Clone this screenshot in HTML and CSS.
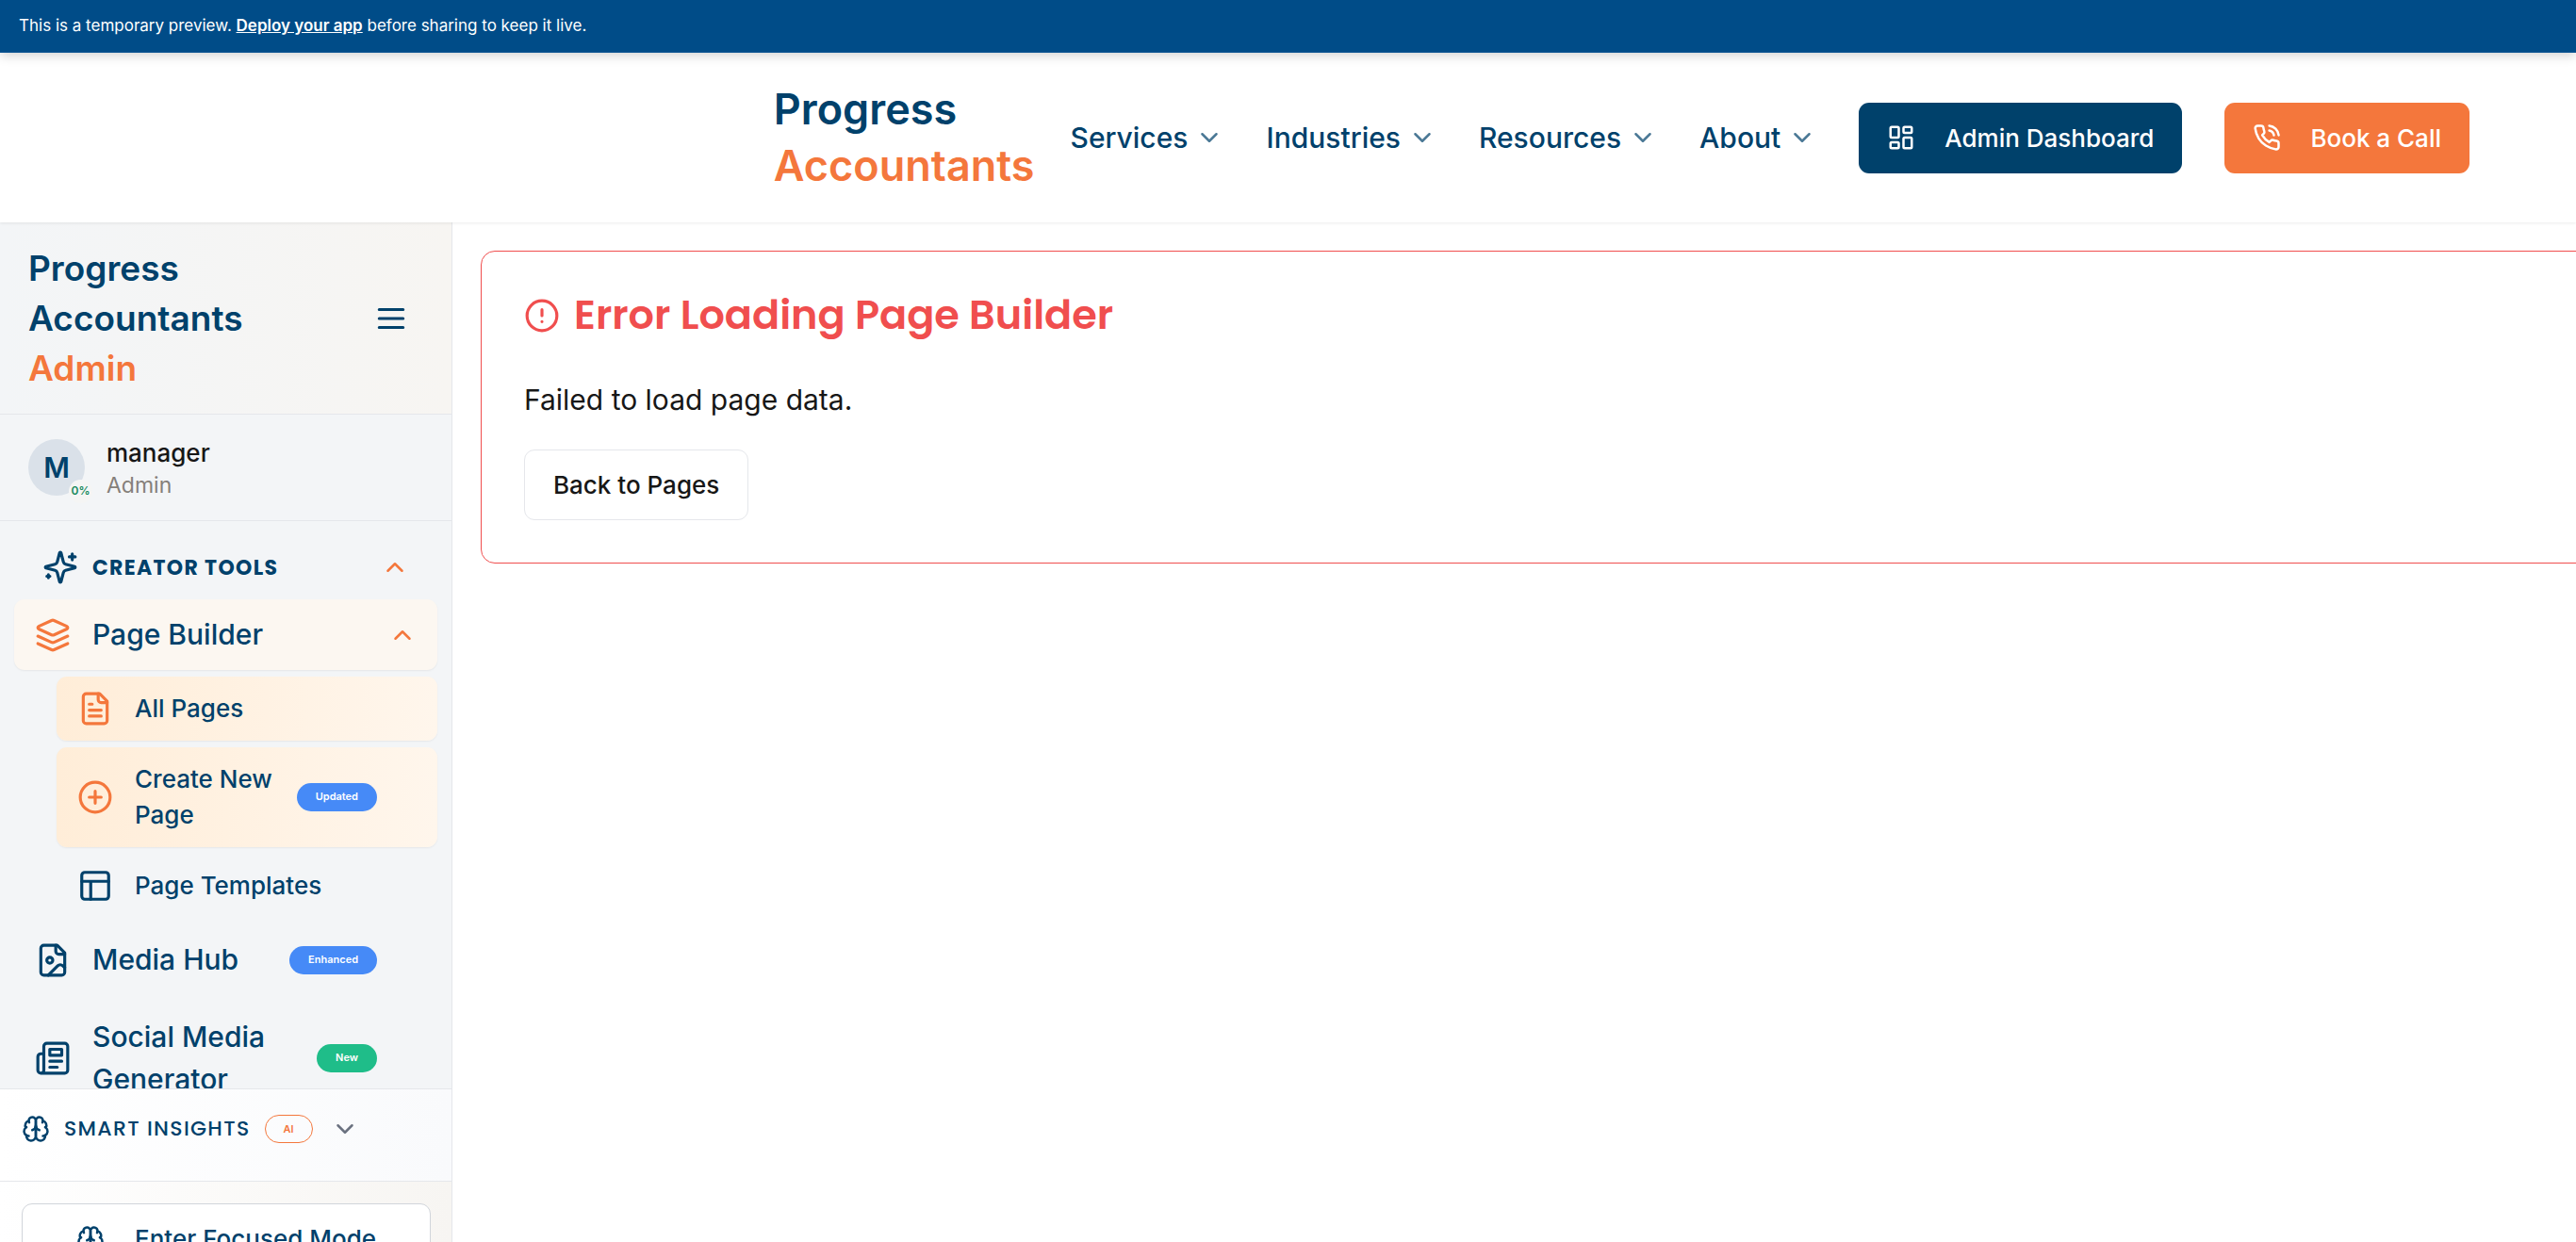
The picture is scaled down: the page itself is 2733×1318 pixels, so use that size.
FILE: index.html
```html
<!DOCTYPE html>
<html lang="en">
<head>
<meta charset="utf-8">
<title>Page Builder - Progress Accountants Admin</title>
<link rel="stylesheet" href="styles.css">
</head>
<body>
<svg class="sprite" aria-hidden="true">
  <symbol id="chevron-down" viewBox="0 0 24 24"><path d="m6 9 6 6 6-6"/></symbol>
  <symbol id="chevron-up" viewBox="0 0 24 24"><path d="m18 15-6-6-6 6"/></symbol>
  <symbol id="dashboard" viewBox="0 0 24 24"><rect width="7" height="9" x="3" y="3" rx="1"/><rect width="7" height="5" x="14" y="3" rx="1"/><rect width="7" height="9" x="14" y="12" rx="1"/><rect width="7" height="5" x="3" y="16" rx="1"/></symbol>
  <symbol id="phone-call" viewBox="0 0 24 24"><path d="M22 16.92v3a2 2 0 0 1-2.18 2 19.79 19.79 0 0 1-8.63-3.07 19.5 19.5 0 0 1-6-6 19.79 19.79 0 0 1-3.07-8.67A2 2 0 0 1 4.11 2h3a2 2 0 0 1 2 1.72 12.84 12.84 0 0 0 .7 2.81 2 2 0 0 1-.45 2.11L8.09 9.91a16 16 0 0 0 6 6l1.27-1.27a2 2 0 0 1 2.11-.45 12.84 12.84 0 0 0 2.81.7A2 2 0 0 1 22 16.92z"/><path d="M14.05 2a9 9 0 0 1 8 7.94"/><path d="M14.05 6A5 5 0 0 1 18 10"/></symbol>
  <symbol id="menu" viewBox="0 0 24 24"><path d="M4 12h16M4 6h16M4 18h16"/></symbol>
  <symbol id="sparkles" viewBox="0 0 24 24"><path d="M9.937 15.5A2 2 0 0 0 8.5 14.063l-6.135-1.582a.5.5 0 0 1 0-.962L8.5 9.936A2 2 0 0 0 9.937 8.5l1.582-6.135a.5.5 0 0 1 .963 0L14.063 8.5A2 2 0 0 0 15.5 9.937l6.135 1.581a.5.5 0 0 1 0 .964L15.5 14.063a2 2 0 0 0-1.437 1.437l-1.582 6.135a.5.5 0 0 1-.963 0z"/><path d="M20 3v4M22 5h-4M4 17v2M5 18H3"/></symbol>
  <symbol id="layers" viewBox="0 0 24 24"><path d="m12.83 2.18a2 2 0 0 0-1.66 0L2.6 6.08a1 1 0 0 0 0 1.83l8.58 3.91a2 2 0 0 0 1.66 0l8.58-3.9a1 1 0 0 0 0-1.83Z"/><path d="m22 17.65-9.17 4.16a2 2 0 0 1-1.66 0L2 17.65"/><path d="m22 12.65-9.17 4.16a2 2 0 0 1-1.66 0L2 12.65"/></symbol>
  <symbol id="file-text" viewBox="0 0 24 24"><path d="M15 2H6a2 2 0 0 0-2 2v16a2 2 0 0 0 2 2h12a2 2 0 0 0 2-2V7Z"/><path d="M14 2v4a2 2 0 0 0 2 2h4M10 9H8M16 13H8M16 17H8"/></symbol>
  <symbol id="plus-circle" viewBox="0 0 24 24"><circle cx="12" cy="12" r="10"/><path d="M8 12h8M12 8v8"/></symbol>
  <symbol id="layout" viewBox="0 0 24 24"><rect width="18" height="18" x="3" y="3" rx="2"/><path d="M3 9h18M9 21V9"/></symbol>
  <symbol id="file-image" viewBox="0 0 24 24"><path d="M15 2H6a2 2 0 0 0-2 2v16a2 2 0 0 0 2 2h12a2 2 0 0 0 2-2V7Z"/><path d="M14 2v4a2 2 0 0 0 2 2h4"/><circle cx="10" cy="12" r="2"/><path d="m20 17-1.296-1.296a2.41 2.41 0 0 0-3.408 0L9 22"/></symbol>
  <symbol id="newspaper" viewBox="0 0 24 24"><path d="M4 22h16a2 2 0 0 0 2-2V4a2 2 0 0 0-2-2H8a2 2 0 0 0-2 2v16a2 2 0 0 1-2 2Zm0 0a2 2 0 0 1-2-2v-9c0-1.1.9-2 2-2h2"/><path d="M18 14h-8M15 18h-5M10 6h8v4h-8V6Z"/></symbol>
  <symbol id="brain" viewBox="0 0 24 24"><path d="M12 5a3 3 0 1 0-5.997.125 4 4 0 0 0-2.526 5.77 4 4 0 0 0 .556 6.588A4 4 0 1 0 12 18Z"/><path d="M12 5a3 3 0 1 1 5.997.125 4 4 0 0 1 2.526 5.77 4 4 0 0 1-.556 6.588A4 4 0 1 1 12 18Z"/><path d="M15 13a4.5 4.5 0 0 1-3-4 4.5 4.5 0 0 1-3 4"/><path d="M17.599 6.5a3 3 0 0 0 .399-1.375M6.003 5.125A3 3 0 0 0 6.401 6.5M3.477 10.896a4 4 0 0 1 .585-.396M19.938 10.5a4 4 0 0 1 .585.396M6 18a4 4 0 0 1-1.967-.516M19.967 17.484A4 4 0 0 1 18 18"/></symbol>
  <symbol id="alert" viewBox="0 0 24 24"><circle cx="12" cy="12" r="10"/><path d="M12 8v4M12 16h.01"/></symbol>
</svg>

<div class="banner">This is a temporary preview. <a href="#deploy">Deploy your app</a> before sharing to keep it live.</div>

<header class="topbar">
  <a class="logo" href="#home"><span>Progress</span><span class="accent">Accountants</span></a>
  <nav class="topnav" aria-label="Main">
    <button class="menu-link">Services<svg class="icon"><use href="#chevron-down"/></svg></button>
    <button class="menu-link">Industries<svg class="icon"><use href="#chevron-down"/></svg></button>
    <button class="menu-link">Resources<svg class="icon"><use href="#chevron-down"/></svg></button>
    <button class="menu-link">About<svg class="icon"><use href="#chevron-down"/></svg></button>
    <a class="button button-navy" href="#dashboard-page"><svg class="icon"><use href="#dashboard"/></svg>Admin Dashboard</a>
    <a class="button button-orange" href="#book"><svg class="icon"><use href="#phone-call"/></svg>Book a Call</a>
  </nav>
</header>

<div class="shell">
  <aside class="sidebar">
    <div class="sidebar-head">
      <div class="sidebar-title">Progress Accountants <span class="accent">Admin</span></div>
      <button class="icon-button" aria-label="Toggle sidebar"><svg class="icon icon-lg"><use href="#menu"/></svg></button>
    </div>
    <div class="user">
      <div class="avatar">M<span class="progress">0%</span></div>
      <div>
        <div class="user-name">manager</div>
        <div class="user-role">Admin</div>
      </div>
    </div>
    <nav class="side-nav" aria-label="Admin">
      <button class="group-toggle"><svg class="icon icon-lg"><use href="#sparkles"/></svg><span class="grow">Creator Tools</span><svg class="icon orange"><use href="#chevron-up"/></svg></button>
      <ul class="items">
        <li>
          <button class="item item-open"><svg class="icon icon-lg orange"><use href="#layers"/></svg><span class="grow">Page Builder</span><svg class="icon orange"><use href="#chevron-up"/></svg></button>
          <ul class="items subitems">
            <li><a class="item subitem active" href="#pages"><svg class="icon icon-lg orange"><use href="#file-text"/></svg><span class="grow">All Pages</span></a></li>
            <li><a class="item subitem active" href="#new-page"><svg class="icon icon-lg orange"><use href="#plus-circle"/></svg><span class="grow">Create New Page</span><span class="badge blue">Updated</span></a></li>
            <li><a class="item subitem" href="#templates"><svg class="icon icon-lg"><use href="#layout"/></svg><span class="grow">Page Templates</span></a></li>
          </ul>
        </li>
        <li><a class="item" href="#media"><svg class="icon icon-lg"><use href="#file-image"/></svg><span class="grow">Media Hub</span><span class="badge blue">Enhanced</span></a></li>
        <li><a class="item" href="#social"><svg class="icon icon-lg"><use href="#newspaper"/></svg><span class="grow">Social Media Generator</span><span class="badge green">New</span></a></li>
      </ul>
    </nav>
    <div class="insights">
      <button class="insights-toggle"><svg class="icon"><use href="#brain"/></svg><span class="insights-label">Smart Insights</span><span class="badge outline">AI</span><svg class="icon gray"><use href="#chevron-down"/></svg></button>
    </div>
    <div class="sidebar-foot">
      <button class="focus-button"><svg class="icon"><use href="#brain"/></svg>Enter Focused Mode</button>
    </div>
  </aside>
  <main class="content">
    <section class="error-card">
      <h1><svg class="icon icon-lg"><use href="#alert"/></svg>Error Loading Page Builder</h1>
      <p>Failed to load page data.</p>
      <button class="button button-outline">Back to Pages</button>
    </section>
  </main>
</div>
</body>
</html>
```
FILE: styles.css
```css
:root {
  --navy: #00416b;
  --orange: #f4773c;
  --line: #e5e7eb;
  --red: #f04e4e;
}

* { box-sizing: border-box; }

body {
  margin: 0;
  height: 100vh;
  overflow: hidden;
  background: #fff;
  color: #171717;
  font: 400 30px/45px Inter, "Liberation Sans", sans-serif;
}

button {
  border: 0;
  padding: 0;
  background: none;
  color: inherit;
  font: inherit;
  text-align: left;
  cursor: pointer;
}

a { color: inherit; text-decoration: none; }
ul { list-style: none; margin: 0; padding: 0; }

.sprite { display: none; }

.icon {
  width: 30px;
  height: 30px;
  flex: none;
  fill: none;
  stroke: currentColor;
  stroke-width: 2;
  stroke-linecap: round;
  stroke-linejoin: round;
}
.icon-lg { width: 38px; height: 38px; }
.orange, .accent { color: var(--orange); }
.gray { color: #6b7280; }
.grow { flex: 1; }

.banner {
  position: relative;
  z-index: 2;
  height: 56px;
  padding: 0 20px;
  background: #004c88;
  border-bottom: 1px solid #0f5794;
  box-shadow: 0 2px 12px rgba(0, 0, 0, 0.2);
  color: #fff;
  font-size: 17px;
  line-height: 54px;
}
.banner a { font-weight: 600; text-decoration: underline; }

.topbar {
  position: relative;
  z-index: 1;
  height: 180px;
  padding-right: 113px;
  display: flex;
  align-items: center;
  justify-content: flex-end;
  gap: 38px;
  background: #fff;
  box-shadow: 0 1px 3px rgba(0, 0, 0, 0.08);
  color: var(--navy);
}
.logo {
  display: flex;
  flex-direction: column;
  font-size: 45px;
  font-weight: 600;
  line-height: 60px;
}
.topnav { display: flex; align-items: center; gap: 45px; }
.menu-link { display: flex; align-items: center; gap: 8px; font-weight: 500; }
.menu-link .icon { opacity: 0.7; }

.button {
  display: inline-flex;
  align-items: center;
  gap: 31px;
  height: 75px;
  padding: 0 30px;
  border-radius: 11px;
  font-size: 26px;
  font-weight: 500;
}
.button-navy { background: var(--navy); color: #fff; }
.button-orange { background: var(--orange); color: #fff; }
.button-outline { background: #fff; border: 1px solid var(--line); }

.shell { display: flex; height: calc(100vh - 180px); }

.sidebar {
  width: 480px;
  flex: none;
  display: flex;
  flex-direction: column;
  background: #f3f5f7;
  border-right: 1px solid var(--line);
  color: var(--navy);
}
.sidebar-head {
  display: flex;
  align-items: center;
  justify-content: space-between;
  padding: 22px 45px 22px 30px;
  background: linear-gradient(90deg, #f3f5f7, #f7f5f2);
  border-bottom: 1px solid var(--line);
}
.sidebar-title {
  width: 260px;
  font-size: 37px;
  font-weight: 600;
  line-height: 53px;
}
.sidebar-title .accent { display: block; }
.icon-button { display: flex; }

.user {
  display: flex;
  align-items: center;
  gap: 23px;
  height: 113px;
  padding: 0 30px;
  border-bottom: 1px solid var(--line);
}
.avatar {
  position: relative;
  width: 60px;
  height: 60px;
  border-radius: 50%;
  background: #dae1e9;
  font-weight: 600;
  line-height: 60px;
  text-align: center;
}
.progress {
  position: absolute;
  right: -8px;
  bottom: -8px;
  width: 25px;
  height: 25px;
  border-radius: 50%;
  background: #f5f5f4;
  color: #188a5e;
  font-size: 12px;
  line-height: 24px;
}
.user-name { color: #171717; font-size: 26px; font-weight: 500; line-height: 38px; }
.user-role { color: #857f7a; font-size: 23px; line-height: 30px; }

.side-nav {
  flex: 1;
  min-height: 0;
  overflow: hidden;
  padding: 15px;
}
.group-toggle {
  display: flex;
  align-items: center;
  gap: 15px;
  width: 100%;
  height: 68px;
  padding: 0 30px;
  font-family: Poppins, Inter, sans-serif;
  font-size: 22px;
  font-weight: 700;
  letter-spacing: 0.06em;
  text-transform: uppercase;
}
.items { display: flex; flex-direction: column; gap: 7px; }
.subitems { margin-top: 7px; padding-left: 45px; }
.item {
  display: flex;
  align-items: center;
  gap: 23px;
  width: 100%;
  min-height: 75px;
  padding: 15px 64px 15px 22px;
  border-radius: 11px;
  font-weight: 500;
}
.item-open {
  padding-right: 22px;
  background: #fcf7f1;
  box-shadow: 0 1px 2px rgba(0, 0, 0, 0.06);
}
.subitem {
  min-height: 68px;
  font-size: 26px;
  line-height: 38px;
}
.active {
  background: linear-gradient(90deg, #ffedd8, #fff6ec);
  box-shadow: 0 1px 2px rgba(0, 0, 0, 0.06);
}

.badge {
  height: 30px;
  padding: 0 20px;
  border-radius: 15px;
  color: #fff;
  font-family: Inter, sans-serif;
  font-size: 11px;
  font-weight: 600;
  line-height: 29px;
}
.blue { background: #468af7; }
.green { background: #1fbd89; }
.outline {
  padding: 0 19px;
  border: 1px solid var(--orange);
  color: var(--orange);
  line-height: 28px;
}

.insights {
  height: 98px;
  padding: 19px 23px;
  border-top: 1px solid var(--line);
  background: linear-gradient(90deg, #fff, #f9fafc);
}
.insights-toggle { display: flex; align-items: center; gap: 15px; }
.insights-label {
  font-family: Poppins, Inter, sans-serif;
  font-size: 22px;
  font-weight: 500;
  letter-spacing: 0.06em;
  text-transform: uppercase;
}
.insights-toggle .gray { margin-left: 4px; }

.sidebar-foot {
  padding: 23px 22px 22px 23px;
  border-top: 1px solid var(--line);
  background: linear-gradient(90deg, #fff, #f7f5f2);
}
.focus-button {
  display: flex;
  align-items: center;
  justify-content: center;
  gap: 32px;
  width: 100%;
  height: 75px;
  border: 1px solid #d1d5db;
  border-radius: 11px;
  background: #fff;
  font-size: 26px;
  font-weight: 500;
}

.content { width: 100%; flex: none; padding: 30px; }
.error-card {
  padding: 45px;
  border: 1px solid var(--red);
  border-radius: 15px;
}
h1 {
  display: flex;
  align-items: center;
  gap: 15px;
  margin: 0;
  color: var(--red);
  font-family: Poppins, Inter, sans-serif;
  font-size: 43px;
  font-weight: 600;
  line-height: 45px;
}
p { margin: 45px 0 30px; }
```
